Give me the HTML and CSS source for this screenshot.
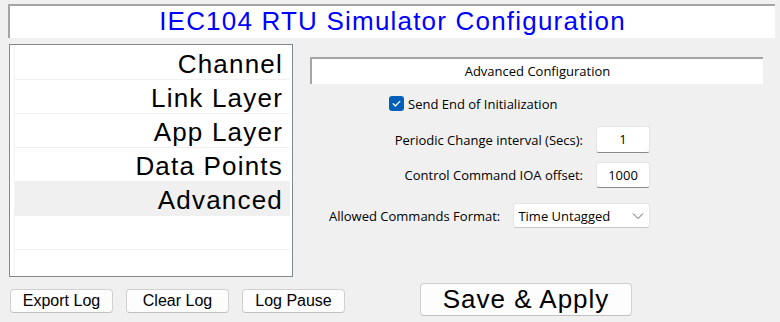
FILE: index.html
```html
<!DOCTYPE html>
<html lang="en">
<head>
  <meta charset="UTF-8" />
  <meta name="viewport" content="width=device-width, initial-scale=1.0"/>
  <title>IEC104 RTU Simulator Configuration</title>
  <link rel="stylesheet" href="styles.css">
</head>
<body>
  <div class="title">IEC104 RTU Simulator Configuration</div>

  <div class="main">
    <ul class="nav">
      <li>Channel</li>
      <li>Link Layer</li>
      <li>App Layer</li>
      <li>Data Points</li>
      <li class="selected">Advanced</li>
      <li></li>
      <li></li>
    </ul>

    <section class="config">
      <div class="config-head">Advanced Configuration</div>

      <label class="check">
        <span class="check-box">
          <svg width="15" height="15" viewBox="0 0 15 15"><path d="M4.2 7.8 L6.4 10 L10.8 5.4" fill="none" stroke="#fff" stroke-width="1.3" stroke-linecap="round" stroke-linejoin="round"/></svg>
        </span>
        Send End of Initialization
      </label>

      <div class="field field-periodic">
        <span>Periodic Change interval (Secs):</span>
        <div class="entry">1</div>
      </div>

      <div class="field field-offset">
        <span>Control Command IOA offset:</span>
        <div class="entry">1000</div>
      </div>

      <div class="field field-format">
        <span class="format-label">Allowed Commands Format:</span>
        <div class="combo">
          <span>Time Untagged</span>
          <svg width="12" height="8" viewBox="0 0 12 8"><path d="M1 1.5 L6 6.5 L11 1.5" fill="none" stroke="#606060" stroke-width="1"/></svg>
        </div>
      </div>
    </section>
  </div>

  <div class="footer">
    <button class="small">Export Log</button>
    <button class="small">Clear Log</button>
    <button class="small">Log Pause</button>
    <button class="big">Save &amp; Apply</button>
  </div>
</body>
</html>
```

FILE: styles.css
```css
:root {
  --background: #f0f0f0;
  --sunken: #a5a5a5;
  --big-font: Arial, 'Liberation Sans', sans-serif;
  --ui-font: 'Open Sans', 'Noto Sans', sans-serif;
}
body {
  margin: 0;
  background: var(--background);
  color: #000;
  font-family: var(--big-font);
}
.title {
  margin: 4px 5px 0 8px;
  height: 32px;
  background: white;
  border-top: 2px solid var(--sunken);
  border-left: 2px solid var(--sunken);
  color: #0000ff;
  font-size: 26px;
  letter-spacing: 1.2px;
  line-height: 30px;
  text-align: center;
}
.main {
  display: flex;
  margin-top: 6px;
}
.nav {
  list-style: none;
  margin: 0 0 0 9px;
  padding: 1px 2px 0 4px;
  width: 284px;
  height: 233px;
  box-sizing: border-box;
  background: white;
  border: 1px solid #828790;
  overflow: hidden;
}
.nav li {
  height: 34px;
  box-sizing: border-box;
  border-bottom: 1px solid #f0f0f0;
  border-left: 1px solid #f3f3f3;
  padding-right: 7px;
  font-size: 26px;
  letter-spacing: 1.2px;
  line-height: 36px;
  text-align: right;
}
.nav li.selected {
  background: #f0f0f0;
}
.config {
  width: 453px;
  margin-left: 17px;
  padding-top: 13px;
  font-family: var(--ui-font);
  font-size: 13px;
}
.config-head {
  height: 25px;
  background: white;
  border-top: 2px solid var(--sunken);
  border-left: 2px solid var(--sunken);
  line-height: 25px;
  text-align: center;
}
.check {
  display: flex;
  align-items: center;
  gap: 4px;
  margin-top: 12px;
  padding-left: 79px;
  height: 15px;
}
.check-box {
  display: block;
  width: 15px;
  height: 15px;
  border-radius: 3px;
  background: #005fb8;
}
.check-box svg {
  display: block;
}
.field {
  display: flex;
  align-items: center;
  justify-content: flex-end;
  gap: 13px;
  padding-right: 113px;
}
.field-periodic {
  margin-top: 15px;
}
.field-offset {
  margin-top: 9px;
}
.field-format {
  margin-top: 15px;
  justify-content: flex-start;
  gap: 0;
  padding-left: 19px;
}
.format-label {
  width: 185px;
}
.entry {
  width: 54px;
  height: 27px;
  box-sizing: border-box;
  background: white;
  border: 1px solid #e5e5e5;
  border-bottom-color: #8a8a8a;
  border-radius: 3px;
  line-height: 24px;
  text-align: center;
}
.field-offset .entry {
  height: 26px;
}
.combo {
  display: flex;
  align-items: center;
  justify-content: space-between;
  width: 137px;
  height: 25px;
  box-sizing: border-box;
  padding: 0 5px 0 4px;
  background: white;
  border: 1px solid #e5e5e5;
  border-bottom-color: #c8c8c8;
  border-radius: 3px;
}
.footer {
  display: flex;
  align-items: flex-start;
  margin-top: 6px;
  padding-left: 10px;
}
button {
  background: #fdfdfd;
  border: 1px solid #d0d0d0;
  border-bottom-color: #c0c0c0;
  border-radius: 4px;
  color: #000;
  font-family: var(--big-font);
  padding: 0;
}
.small {
  width: 103px;
  height: 24px;
  margin: 6px 13px 0 0;
  font-size: 16px;
}
.big {
  width: 212px;
  height: 33px;
  margin-left: 62px;
  font-size: 26px;
  letter-spacing: 1px;
}
```
